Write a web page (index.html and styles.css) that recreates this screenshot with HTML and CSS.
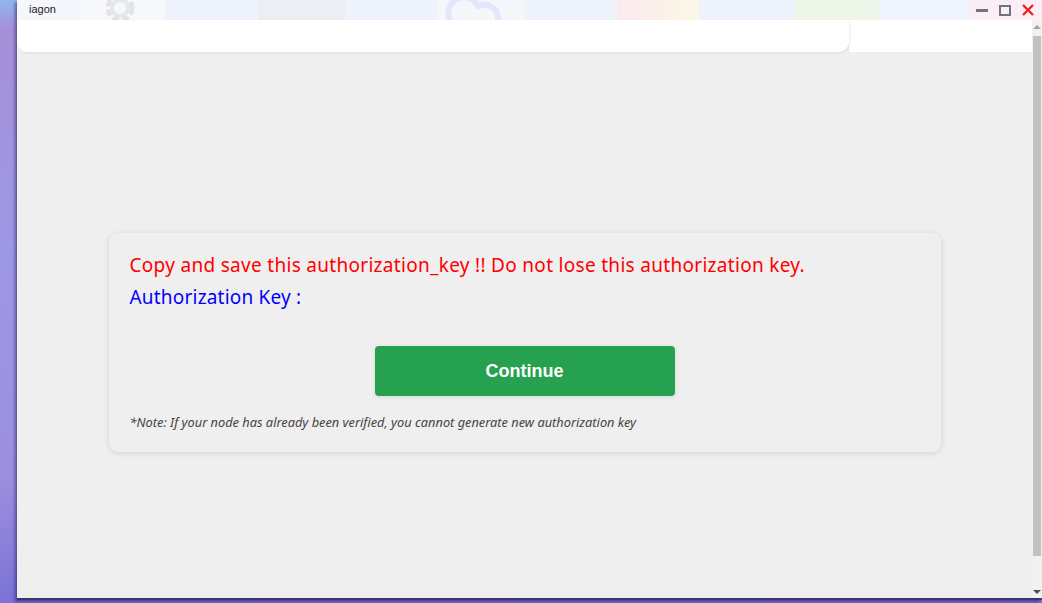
FILE: index.html
```html
<!DOCTYPE html>
<html>
<head>
<meta charset="utf-8">
<link rel="stylesheet" href="styles.css">
</head>
<body>
<div class="desktop">
  <div class="window">
    <div class="titlebar">
      <div class="tiles">
        <div class="tile t-a"></div>
        <div class="tile t-gear">
          <svg width="85" height="20" viewBox="0 0 85 20"><circle cx="40" cy="8" r="11" fill="none" stroke="#e2e3e6" stroke-width="7" stroke-dasharray="6 3"/><circle cx="40" cy="8" r="8" fill="none" stroke="#e6e7ea" stroke-width="4"/></svg>
        </div>
        <div class="tile t-blue"></div>
        <div class="tile t-gray"></div>
        <div class="tile t-blue"></div>
        <div class="tile t-cloud">
          <svg width="86" height="20" viewBox="0 0 86 20"><path d="M12 20 A14 14 0 0 1 40 6 A14 14 0 0 1 60 20" fill="none" stroke="#e4e6fb" stroke-width="6"/></svg>
        </div>
        <div class="tile t-blue"></div>
        <div class="tile t-grid"></div>
        <div class="tile t-blue2"></div>
        <div class="tile t-green"></div>
        <div class="tile t-blue3"></div>
        <div class="tile t-pink"></div>
      </div>
      <span class="app-title">iagon</span>
      <div class="controls">
        <span class="ctl-min"></span>
        <span class="ctl-max"></span>
        <svg class="ctl-close" width="12" height="12" viewBox="0 0 12 12"><path d="M1 1 L11 11 M11 1 L1 11" stroke="#ee2222" stroke-width="2.4"/></svg>
      </div>
    </div>
    <div class="body">
      <div class="viewport">
        <div class="header">
          <div class="header-box"></div>
          <div class="header-rest"></div>
        </div>
        <main class="main">
          <section class="card">
            <p class="warn">Copy and save this authorization_key !! Do not lose this authorization key.</p>
            <p class="key">Authorization Key :</p>
            <div class="btn-row"><button class="btn">Continue</button></div>
            <p class="note">*Note: If your node has already been verified, you cannot generate new authorization key</p>
          </section>
        </main>
      </div>
      <div class="scrollbar">
        <span class="arrow up"></span>
        <span class="thumb"></span>
        <span class="arrow down"></span>
      </div>
    </div>
  </div>
</div>
</body>
</html>
```
FILE: styles.css
```css
* { box-sizing: border-box; }
html, body { margin: 0; padding: 0; }
body {
  width: 1042px;
  height: 603px;
  overflow: hidden;
  font-family: "Liberation Sans", Arial, sans-serif;
}
.desktop {
  width: 1042px;
  height: 603px;
  background: linear-gradient(180deg, #8fb6f0 0px, #a58fd9 30px, #9d98e6 250px, #9c8ee0 480px, #7a72d6 603px);
  padding-left: 17px;
  display: flex;
}
.window {
  width: 1025px;
  height: 600px;
  display: flex;
  flex-direction: column;
  box-shadow: -2px 2px 3px rgba(40, 30, 90, 0.55);
  border-bottom: 2px solid #3a3570;
}
.titlebar {
  height: 20px;
  position: relative;
  background: #f4f6fc;
  flex: none;
  overflow: hidden;
}
.tiles { display: flex; height: 20px; }
.tile { height: 20px; flex: none; }
.t-a { width: 63px; background: #f5f7fc; }
.t-gear { width: 85px; background: #f7f8fa; }
.t-blue { width: 93px; background: #eef3fc; }
.t-gray { width: 87px; background: #eceef3; }
.t-cloud { width: 86px; background: #f6f7fb; }
.t-grid { width: 82px; background: linear-gradient(90deg, #fbe9ee, #fbf8e6); }
.t-blue2 { width: 95px; background: #eff4fc; }
.t-green { width: 85px; background: #eef6ea; }
.t-blue3 { width: 90px; background: #f0f4fc; }
.t-pink { width: 80px; background: #fbeef6; }
.app-title {
  position: absolute;
  left: 12px;
  top: 3px;
  font-size: 11px;
  color: #222;
  font-family: "Liberation Sans", Arial, sans-serif;
}
.controls {
  position: absolute;
  right: 8px;
  top: 4px;
  display: flex;
  align-items: center;
  gap: 11px;
}
.ctl-min { width: 12px; height: 3px; background: #6f7680; }
.ctl-max { width: 12px; height: 11px; border: 2.5px solid #6f7680; }
.ctl-close { display: block; }
.body {
  flex: 1;
  display: flex;
  min-height: 0;
}
.viewport {
  flex: 1;
  display: flex;
  flex-direction: column;
  background: #efefef;
}
.header {
  height: 32px;
  display: flex;
  flex: none;
}
.header-box {
  width: 832px;
  background: #fff;
  border-radius: 0 0 10px 10px;
  box-shadow: 1px 1px 3px rgba(0, 0, 0, 0.08);
  position: relative;
  z-index: 1;
}
.header-rest { flex: 1; background: #fff; }
.main {
  flex: 1;
  display: flex;
  justify-content: center;
  padding-top: 181px;
}
.card {
  width: 832px;
  height: 219px;
  background: #efefef;
  border-radius: 9px;
  box-shadow: 0 1px 6px rgba(0, 0, 0, 0.12);
  padding: 18px 21px;
}
.warn {
  margin: 0;
  color: #ff0000;
  font-family: "Noto Sans", sans-serif;
  font-size: 19px;
  letter-spacing: 0.3px;
  line-height: 28px;
}
.key {
  margin: 4px 0 0;
  color: #0000ff;
  font-family: "Noto Sans", sans-serif;
  font-size: 19px;
  letter-spacing: 0.2px;
  line-height: 28px;
}
.btn-row {
  display: flex;
  justify-content: center;
  margin-top: 35px;
}
.btn {
  width: 300px;
  height: 50px;
  background: #25a14f;
  color: #fff;
  border: none;
  border-radius: 4px;
  font-family: "Liberation Sans", Arial, sans-serif;
  font-weight: bold;
  font-size: 18px;
  box-shadow: 0 1px 4px rgba(0, 0, 0, 0.1);
}
.note {
  margin: 17px 0 0;
  font-family: "Noto Sans", sans-serif;
  font-style: italic;
  font-size: 12.8px;
  color: #444;
}
.scrollbar {
  width: 10px;
  flex: none;
  background: #f1f1f1;
  display: flex;
  flex-direction: column;
  align-items: center;
  padding: 5px 0 4px;
}
.arrow {
  width: 0; height: 0;
  border-left: 4px solid transparent;
  border-right: 4px solid transparent;
}
.arrow.up { border-bottom: 4px solid #a3a3a3; }
.arrow.down { border-top: 4px solid #505050; margin-top: auto; }
.thumb {
  width: 8px;
  height: 520px;
  margin-top: 7px;
  background: #c1c1c1;
}
```
